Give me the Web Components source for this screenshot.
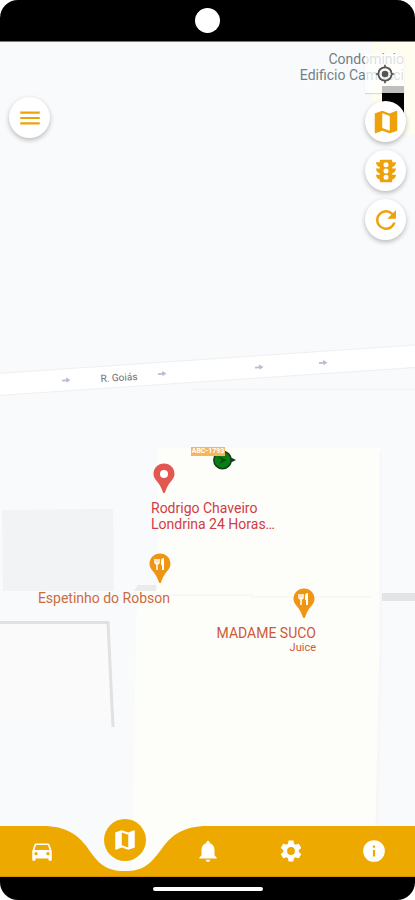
<!DOCTYPE html>
<html lang="pt-BR">
<head>
<meta charset="utf-8">
<meta name="viewport" content="width=device-width, initial-scale=1">
<title>Mapa</title>
<style>
  body { margin: 0; background: #fff; font-family: Roboto, "Liberation Sans", sans-serif; }
</style>
</head>
<body>
<tracker-phone>
  <street-map slot="map">
    <map-label style="--x:404px;--y:51px;--dx:-100%;--ink:#6f7f86;text-align:right">Condominio<br>Edificio Camuaci</map-label>
    <map-label style="--x:119px;--y:370px;--dx:-50%;--turn:-3deg;--size:10px;--ink:#6b6f73">R. Goiás</map-label>
    <map-pin kind="place" style="--x:164px;--y:463px;--fill:#e2574f"></map-pin>
    <map-label style="--x:151px;--y:500px;--ink:#cf3c46">Rodrigo Chaveiro<br>Londrina 24 Horas…</map-label>
    <map-pin kind="food" style="--x:160px;--y:553px;--fill:#ee9613"></map-pin>
    <map-label style="--x:170px;--y:590px;--dx:-100%;--ink:#cc6a3c">Espetinho do Robson</map-label>
    <map-pin kind="food" style="--x:304px;--y:588px;--fill:#ee9613"></map-pin>
    <map-label style="--x:316px;--y:625px;--dx:-100%;--ink:#cc5a36;text-align:right">MADAME SUCO<small>Juice</small></map-label>
    <vehicle-marker style="--x:191px;--y:447px">ABC-1793</vehicle-marker>
  </street-map>
  <round-button slot="menu" icon="menu" label="Menu"></round-button>
  <locate-button slot="tools"></locate-button>
  <round-button slot="tools" icon="map" label="Tipo de mapa"></round-button>
  <round-button slot="tools" icon="traffic" label="Trânsito"></round-button>
  <round-button slot="tools" icon="refresh" label="Atualizar"></round-button>
  <tab-bar slot="tabs">
    <tab-item icon="car" label="Veículos"></tab-item>
    <tab-item icon="map" label="Mapa" active></tab-item>
    <tab-item icon="bell" label="Alertas"></tab-item>
    <tab-item icon="gear" label="Ajustes"></tab-item>
    <tab-item icon="info" label="Informações"></tab-item>
  </tab-bar>
</tracker-phone>

<script>
const ICONS = {
  menu: 'M3 18h18v-2H3v2zm0-5h18v-2H3v2zm0-7v2h18V6H3z',
  map: 'M20.5 3l-.16.03L15 5.1 9 3 3.36 4.9c-.21.07-.36.25-.36.48V20.5c0 .28.22.5.5.5l.16-.03L9 18.9l6 2.1 5.64-1.9c.21-.07.36-.25.36-.48V3.5c0-.28-.22-.5-.5-.5zM15 19l-6-2.11V5l6 2.11V19z',
  traffic: 'M20 10h-3V8.86c1.72-.45 3-2 3-3.86h-3V4c0-.55-.45-1-1-1H8c-.55 0-1 .45-1 1v1H4c0 1.86 1.28 3.41 3 3.86V10H4c0 1.86 1.28 3.41 3 3.86V15H4c0 1.86 1.28 3.41 3 3.86V20c0 .55.45 1 1 1h8c.55 0 1-.45 1-1v-1.14c1.72-.45 3-2 3-3.86h-3v-1.14c1.72-.45 3-2 3-3.86zM12 19a2 2 0 1 1 0-4 2 2 0 0 1 0 4zm0-5a2 2 0 1 1 0-4 2 2 0 0 1 0 4zm0-5a2 2 0 1 1 0-4 2 2 0 0 1 0 4z',
  refresh: 'M17.65 6.35A7.96 7.96 0 0 0 12 4a8 8 0 1 0 7.73 10h-2.08A6 6 0 1 1 12 6c1.66 0 3.14.69 4.22 1.78L13 11h7V4l-2.35 2.35z',
  car: 'M18.92 6.01C18.72 5.42 18.16 5 17.5 5h-11c-.66 0-1.21.42-1.42 1.01L3 12v8c0 .55.45 1 1 1h1c.55 0 1-.45 1-1v-1h12v1c0 .55.45 1 1 1h1c.55 0 1-.45 1-1v-8l-2.08-5.99zM6.5 16a1.5 1.5 0 1 1 0-3 1.5 1.5 0 0 1 0 3zm11 0a1.5 1.5 0 1 1 0-3 1.5 1.5 0 0 1 0 3zM5 11l1.5-4.5h11L19 11H5z',
  bell: 'M12 22c1.1 0 2-.9 2-2h-4c0 1.1.89 2 2 2zm6-6v-5c0-3.07-1.64-5.64-4.5-6.32V4a1.5 1.5 0 0 0-3 0v.68C7.63 5.36 6 7.92 6 11v5l-2 2v1h16v-1l-2-2z',
  gear: 'M19.14 12.94c.04-.3.06-.61.06-.94 0-.32-.02-.64-.07-.94l2.03-1.58c.18-.14.23-.41.12-.61l-1.92-3.32c-.12-.22-.37-.29-.59-.22l-2.39.96c-.5-.38-1.03-.7-1.62-.94l-.36-2.54c-.04-.24-.24-.41-.48-.41h-3.84c-.24 0-.43.17-.47.41l-.36 2.54c-.59.24-1.13.57-1.62.94l-2.39-.96c-.22-.08-.47 0-.59.22L2.74 8.87c-.12.21-.08.47.12.61l2.03 1.58c-.05.3-.09.63-.09.94s.02.64.07.94l-2.03 1.58c-.18.14-.23.41-.12.61l1.92 3.32c.12.22.37.29.59.22l2.39-.96c.5.38 1.03.7 1.62.94l.36 2.54c.05.24.24.41.48.41h3.84c.24 0 .44-.17.47-.41l.36-2.54c.59-.24 1.13-.56 1.62-.94l2.39.96c.22.08.47 0 .59-.22l1.92-3.32c.12-.22.07-.47-.12-.61l-2.01-1.58zM12 15.6A3.6 3.6 0 1 1 12 8.4a3.6 3.6 0 0 1 0 7.2z',
  info: 'M12 2a10 10 0 1 0 0 20 10 10 0 0 0 0-20zm1 15h-2v-6h2v6zm0-8h-2V7h2v2z',
  locate: 'M12 8a4 4 0 1 0 0 8 4 4 0 0 0 0-8zm8.94 3A8.99 8.99 0 0 0 13 3.06V1h-2v2.06A8.99 8.99 0 0 0 3.06 11H1v2h2.06A8.99 8.99 0 0 0 11 20.94V23h2v-2.06A8.99 8.99 0 0 0 20.94 13H23v-2h-2.06zM12 19a7 7 0 1 1 0-14 7 7 0 0 1 0 14z'
};
const icon = name => `<svg viewBox="0 0 24 24" aria-hidden="true"><path fill="currentColor" fill-rule="evenodd" d="${ICONS[name]}"/></svg>`;

const define = (name, render) => customElements.define(name, class extends HTMLElement {
  constructor() { super(); this.attachShadow({ mode: 'open' }); }
  connectedCallback() { this.shadowRoot.innerHTML = render(this); }
});

define('tracker-phone', () => `
<style>
  :host { display: flex; flex-direction: column; min-height: 100vh; border-radius: 18px; overflow: hidden; background: #000; }
  header { display: flex; justify-content: center; align-items: center; height: 41px; border-bottom: 1px solid #77797b; }
  header i { width: 25px; height: 25px; border-radius: 50%; background: #fff; }
  main { flex: 1; display: grid; grid-template: 1fr / 1fr; }
  main > * { grid-area: 1 / 1; }
  ::slotted([slot=map]) { grid-area: 1 / 1; }
  ::slotted([slot=tabs]) { grid-area: 1 / 1; align-self: end; }
  .tools { display: flex; justify-content: space-between; align-items: start; padding: 12px 9px; z-index: 1; pointer-events: none; }
  .left { padding-top: 43px; }
  .right { display: flex; flex-direction: column; gap: 8px; }
  footer { display: flex; justify-content: center; align-items: center; height: 23px; }
  footer i { width: 110px; height: 4px; border-radius: 2px; background: #fff; }
</style>
<header><i></i></header>
<main>
  <slot name="map"></slot>
  <div class="tools"><div class="left"><slot name="menu"></slot></div><div class="right"><slot name="tools"></slot></div></div>
  <slot name="tabs"></slot>
</main>
<footer><i></i></footer>`);

/* Free map canvas; coordinates count from the top of the device. */
define('street-map', () => `
<style>
  :host { display: block; position: relative; overflow: hidden; background: #f8fafc; }
  .canvas { position: absolute; inset: -42px 0 0 0; }
  svg { display: block; width: 100%; height: 100%; }
</style>
<div class="canvas">
  <svg aria-hidden="true">
    <path d="M372 42H2000V135H392L372 110Z" fill="#fffcf0"/>
    <path d="M382 86h22v30h-22z" fill="#000"/>
    <path d="M-10 374L415 345L2000 238V261L415 367.500L-10 396Z" fill="#fff" stroke="#eeeff0"/>
    <path d="M190 389.500H2000" stroke="#f2f3f4"/>
    <path d="M380 600H2000V900H376Z" fill="#f9fafb"/>
    <path d="M158 448H381V640L377 900H131L137 590H158Z" fill="#fdfdf9"/>
    <path d="M381 452V640L377 826" fill="none" stroke="#f6f7f8" stroke-width="3"/>
    <path d="M158 595H252V597H372" fill="none" stroke="#f7f8f7" stroke-width="2"/>
    <path d="M382 593H2000v8H382z" fill="#e3e4e4"/>
    <path d="M2 510l91-1h20l1 82H3z" fill="#f1f3f4"/>
    <path d="M134 591l4-6h18v6z" fill="#ebecea"/>
    <path d="M0 623H108L113 728H0Z" fill="#fafafb"/>
    <path d="M0 622.500H108L113 727" fill="none" stroke="#e0e1e2" stroke-width="3"/>
    <g fill="#b9bdd0">
      <path id="way" d="M62 379.800l4-.3v-2l4.500 2.500-4 2.800v-1.600l-4.500.2z"/>
      <use href="#way" x="96" y="-6.500"/><use href="#way" x="193" y="-13"/><use href="#way" x="257" y="-17.500"/>
    </g>
  </svg>
  <slot></slot>
</div>`);

define('map-label', () => `
<style>
  :host { position: absolute; left: var(--x); top: var(--y); transform: translateX(var(--dx, 0)) rotate(var(--turn, 0deg)); color: var(--ink); font-size: var(--size, 14px); line-height: 16px; white-space: nowrap; text-shadow: 0 0 2px #fff; }
  ::slotted(small) { display: block; font-size: 11px; line-height: 14px; }
</style><slot></slot>`);

define('map-pin', el => `
<style>
  :host { position: absolute; left: var(--x); top: var(--y); transform: translateX(-50%); }
  svg { display: block; width: 22px; height: 30px; }
</style>
<svg viewBox="0 0 22 30" aria-hidden="true">
  <path fill="var(--fill)" d="M11 0.500C5 .5.500 5 .5 11c0 6 6.500 8 9.500 18.500q1 1 2 0C15 19 21.500 17 21.500 11 21.500 5 17 .5 11 .5z"/>
  ${el.getAttribute('kind') === 'food'
    ? '<path fill="none" stroke="#fff" stroke-width="1.500" d="M6 6v3q0 2 2 2t2-2V6M8 6v11"/><path fill="#fff" d="M12 8q0-3 3-3v12h-2v-5h-1z"/>'
    : '<circle cx="11" cy="11" r="4" fill="#fff"/>'}
</svg>`);

define('vehicle-marker', () => `
<style>
  :host { position: absolute; left: var(--x); top: var(--y); display: flex; align-items: flex-start; }
  span { background: #f6b65c; color: #fff; font-size: 7px; line-height: 9px; width: 34px; text-align: center; font-weight: 700; z-index: 1; white-space: nowrap; }
  svg { width: 24px; height: 22px; margin: 2px 0 0 -13px; }
</style>
<span><slot></slot></span>
<svg viewBox="0 0 24 22" aria-hidden="true">
  <path d="M18 8l6 3-6 3z" fill="#173c1b"/>
  <circle cx="10.500" cy="11" r="8.700" fill="#087e16" stroke="#163d1a" stroke-width="1.500"/>
  <path d="M5 7l10 4-8 4 3-4z" fill="#06500d"/>
</svg>`);

define('round-button', el => `
<style>
  :host { display: block; pointer-events: auto; }
  button { display: grid; place-items: center; width: 41px; height: 41px; padding: 0; border: 0; border-radius: 50%; background: #fff; color: #eda20c; box-shadow: 0 2px 5px #0004; }
  svg { width: 30px; height: 30px; }
  .menu svg { width: 26px; height: 26px; }
</style>
<button type="button" class="${el.getAttribute('icon')}" aria-label="${el.getAttribute('label')}">${icon(el.getAttribute('icon'))}</button>`);

define('locate-button', () => `
<style>
  :host { display: block; pointer-events: auto; }
  button { display: grid; place-items: center; width: 39px; height: 39px; padding: 0; border: 0; background: #ffffffbf; color: #555; box-shadow: 0 1px 1px #0002; }
  svg { width: 20px; height: 20px; }
</style>
<button type="button" aria-label="Minha localização">${icon('locate')}</button>`);

define('tab-bar', () => `
<style>
  :host { display: grid; color: #fff; z-index: 1; }
  svg, nav { grid-area: 1 / 1; }
  svg { width: 100%; height: 51px; align-self: end; }
  nav { display: flex; }
</style>
<svg viewBox="0 0 415 51" preserveAspectRatio="none" aria-hidden="true">
  <path fill="#eda900" d="M0 0H43C66 0 78 9 87 21C98 37 105 45 125 45C145 45 151 37 163 21C172 9 184 0 207 0H415V51H0Z"/>
  <path fill="#cf9200" d="M0 50H415v1H0z"/>
</svg>
<nav aria-label="Principal"><slot></slot></nav>`);

define('tab-item', el => `
<style>
  :host { flex: 1; display: flex; justify-content: center; align-items: flex-end; height: 58px; }
  button { display: grid; place-items: center; width: 42px; height: 42px; margin: 0 0 5px; padding: 0; border: 0; border-radius: 50%; background: none; color: inherit; }
  :host([active]) button { background: #eda900; margin-bottom: 16px; }
  svg { width: 26px; height: 26px; }
</style>
<button type="button" aria-label="${el.getAttribute('label')}">${icon(el.getAttribute('icon'))}</button>`);
</script>
</body>
</html>
